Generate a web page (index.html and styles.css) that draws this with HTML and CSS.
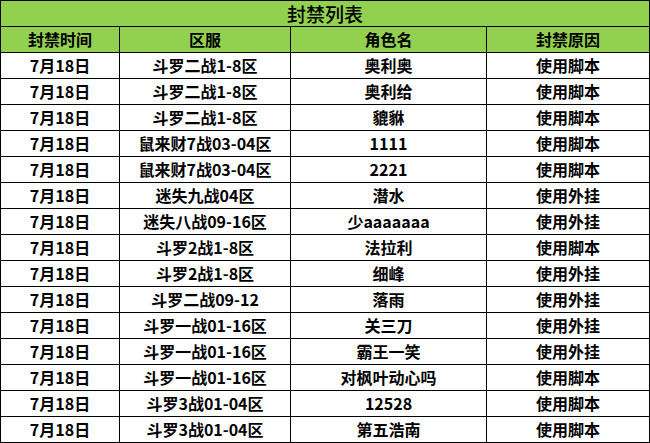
FILE: index.html
```html
<!DOCTYPE html>
<html lang="zh">
<head>
<meta charset="utf-8">
<link rel="stylesheet" href="styles.css">
</head>
<body>
<table class="ban">
<colgroup><col class="c1"><col class="c2"><col class="c3"><col class="c4"></colgroup>
<thead>
<tr class="title"><th colspan="4">封禁列表</th></tr>
<tr class="head"><th>封禁时间</th><th>区服</th><th>角色名</th><th>封禁原因</th></tr>
</thead>
<tbody>
<tr><td>7月18日</td><td>斗罗二战1-8区</td><td>奥利奥</td><td>使用脚本</td></tr>
<tr><td>7月18日</td><td>斗罗二战1-8区</td><td>奥利给</td><td>使用脚本</td></tr>
<tr><td>7月18日</td><td>斗罗二战1-8区</td><td>貔貅</td><td>使用脚本</td></tr>
<tr><td>7月18日</td><td>鼠来财7战03-04区</td><td>1111</td><td>使用脚本</td></tr>
<tr><td>7月18日</td><td>鼠来财7战03-04区</td><td>2221</td><td>使用脚本</td></tr>
<tr><td>7月18日</td><td>迷失九战04区</td><td>潜水</td><td>使用外挂</td></tr>
<tr><td>7月18日</td><td>迷失八战09-16区</td><td>少aaaaaaa</td><td>使用外挂</td></tr>
<tr><td>7月18日</td><td>斗罗2战1-8区</td><td>法拉利</td><td>使用脚本</td></tr>
<tr><td>7月18日</td><td>斗罗2战1-8区</td><td>细峰</td><td>使用外挂</td></tr>
<tr><td>7月18日</td><td>斗罗二战09-12</td><td>落雨</td><td>使用外挂</td></tr>
<tr><td>7月18日</td><td>斗罗一战01-16区</td><td>关三刀</td><td>使用外挂</td></tr>
<tr><td>7月18日</td><td>斗罗一战01-16区</td><td>霸王一笑</td><td>使用外挂</td></tr>
<tr><td>7月18日</td><td>斗罗一战01-16区</td><td>对枫叶动心吗</td><td>使用脚本</td></tr>
<tr><td>7月18日</td><td>斗罗3战01-04区</td><td>12528</td><td>使用脚本</td></tr>
<tr><td>7月18日</td><td>斗罗3战01-04区</td><td>第五浩南</td><td>使用脚本</td></tr>
</tbody>
</table>
</body>
</html>
```
FILE: styles.css
```css
html, body {
  margin: 0;
  padding: 0;
  background: #ffffff;
}
.ban {
  border-collapse: collapse;
  table-layout: fixed;
  width: 649px;
  font-family: "Noto Sans CJK SC", "DejaVu Sans", sans-serif;
  font-size: 16px;
  font-weight: bold;
  color: #000000;
}
.c1 { width: 119px; }
.c2 { width: 171px; }
.c3 { width: 196px; }
.c4 { width: 163px; }
.ban th, .ban td {
  border: 1px solid #000000;
  height: 25px;
  padding: 0;
  text-align: center;
  vertical-align: middle;
  line-height: 25px;
  white-space: nowrap;
  overflow: hidden;
}
.ban thead th {
  background: #92d050;
}
.ban .title th {
  font-size: 19px;
  font-weight: 500;
}
.ban td {
  background: #ffffff;
}
```
